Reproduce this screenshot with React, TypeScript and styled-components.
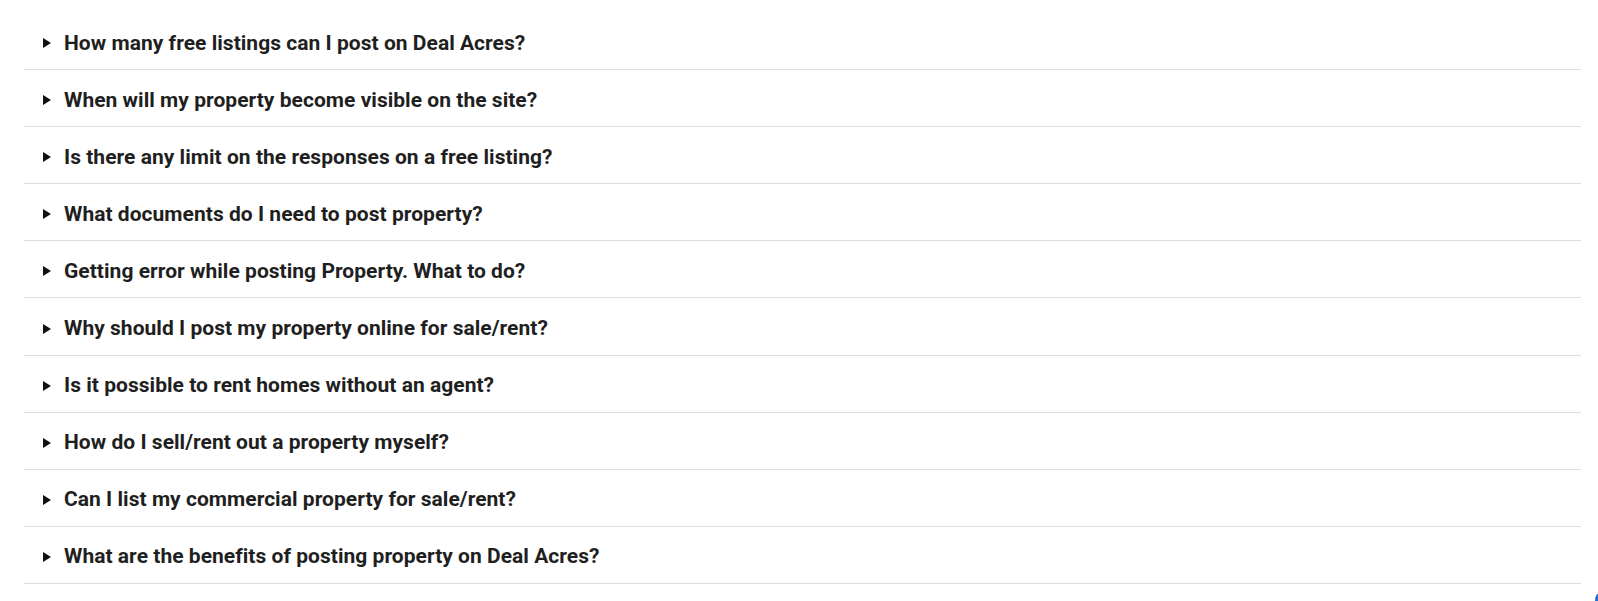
import React from "react";
import styled, { createGlobalStyle } from "styled-components";

const GlobalStyle = createGlobalStyle`
  html, body { margin: 0; padding: 0; background: #ffffff; }
  body { font-family: Roboto, "Liberation Sans", Arial, sans-serif; overflow: hidden; }
`;

const Page = styled.div`
  position: relative;
  width: 1598px;
  height: 601px;
  padding: 13px 17px 0 24px;
  box-sizing: border-box;
`;

const List = styled.div`
  display: flex;
  flex-direction: column;
`;

const Row = styled.div`
  display: flex;
  align-items: center;
  height: 56.1px;
  border-bottom: 1px solid #dedede;
  padding-left: 19px;
  gap: 13px;
  cursor: pointer;
`;

const Marker = styled.span`
  width: 0;
  height: 0;
  border-top: 5px solid transparent;
  border-bottom: 5px solid transparent;
  border-left: 8px solid #111;
  margin-top: 4px;
  flex-shrink: 0;
`;

const Question = styled.span`
  font-size: 21px;
  font-weight: 700;
  color: #1f1f1f;
  letter-spacing: 0.03px;
  padding-top: 3px;
`;

const Corner = styled.div`
  position: absolute;
  right: 0;
  bottom: 0;
  width: 3px;
  height: 7px;
  background: #1a6fe6;
  border-top-left-radius: 3px 7px;
`;

const questions = [
  "How many free listings can I post on Deal Acres?",
  "When will my property become visible on the site?",
  "Is there any limit on the responses on a free listing?",
  "What documents do I need to post property?",
  "Getting error while posting Property. What to do?",
  "Why should I post my property online for sale/rent?",
  "Is it possible to rent homes without an agent?",
  "How do I sell/rent out a property myself?",
  "Can I list my commercial property for sale/rent?",
  "What are the benefits of posting property on Deal Acres?",
];

export default function App() {
  return (
    <>
      <GlobalStyle />
      <Page>
        <List>
          {questions.map((q) => (
            <Row key={q}>
              <Marker />
              <Question>{q}</Question>
            </Row>
          ))}
        </List>
        <Corner />
      </Page>
    </>
  );
}
